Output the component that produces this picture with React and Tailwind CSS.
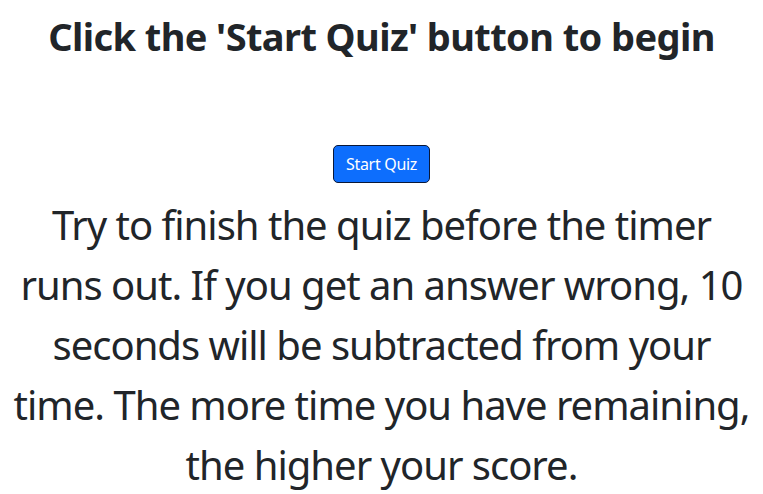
import React from 'react';

function App() {
    return (
        <div
            className="min-h-screen bg-white text-[#212529] text-center px-3"
            style={{ fontFamily: '"Segoe UI", "Noto Sans", sans-serif' }}
        >
            <h2 className="pt-[14px] text-[38px] font-bold leading-[1.2] tracking-[-0.6px]">
                Click the 'Start Quiz' button to begin
            </h2>

            <div className="mt-[85px] flex justify-center">
                <button className="px-3 py-1.5 text-base leading-6 text-white bg-[#0d6efd] border border-[#0a1838] rounded-[5px] tracking-[-0.3px]">
                    Start Quiz
                </button>
            </div>

            <p className="mt-[12px] text-[40px] leading-[60px] tracking-[-1px]">
                Try to finish the quiz before the timer runs out. If you get an answer wrong, 10 seconds will be subtracted from your time. The more time you have remaining, the higher your score.
            </p>
        </div>
    );
}

export default App;
